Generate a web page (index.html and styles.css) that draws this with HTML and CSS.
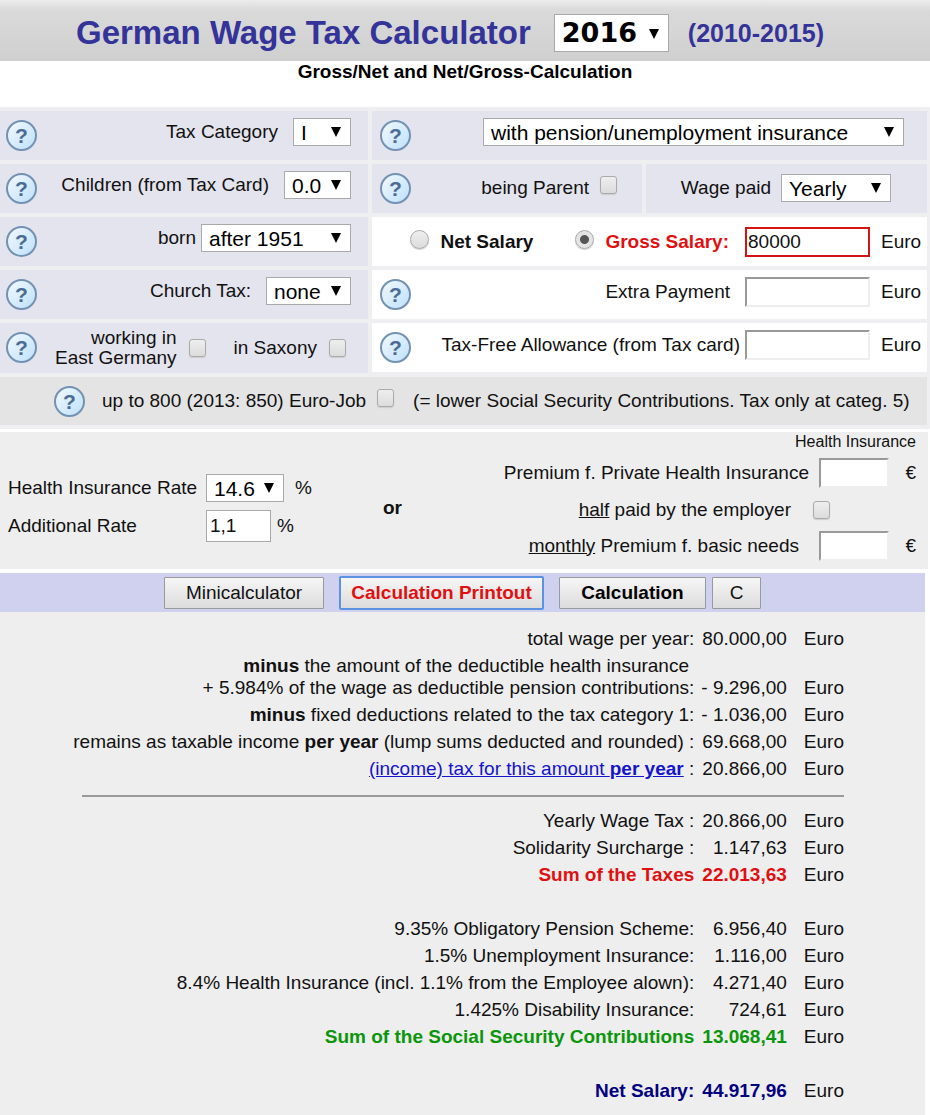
FILE: index.html
```html
<!DOCTYPE html>
<html lang="en">
<head>
<meta charset="utf-8">
<meta name="viewport" content="width=device-width, initial-scale=1">
<title>German Wage Tax Calculator</title>
<link rel="stylesheet" href="styles.css">
</head>
<body>

<header class="top">
  <h1>German Wage Tax Calculator</h1>
  <span class="select year"><select aria-label="Year"><option>2016</option></select></span>
  <span class="years">(2010-2015)</span>
</header>
<h2>Gross/Net and Net/Gross-Calculation</h2>

<form>
<div class="fields">
  <div class="cell">
    <a class="help" href="#">?</a>
    <div class="field">
      <label for="category">Tax Category</label>
      <span class="select category"><select id="category"><option>I</option></select></span>
    </div>
  </div>
  <div class="cell wide">
    <a class="help" href="#">?</a>
    <div class="field">
      <span class="select insurance"><select aria-label="Insurance"><option>with pension/unemployment insurance</option></select></span>
    </div>
  </div>

  <div class="cell">
    <a class="help" href="#">?</a>
    <div class="field">
      <label for="children">Children (from Tax Card)</label>
      <span class="select children"><select id="children"><option>0.0</option></select></span>
    </div>
  </div>
  <div class="split">
    <div class="cell parent">
      <a class="help" href="#">?</a>
      <div class="field">
        <label for="parent">being Parent</label>
        <input type="checkbox" id="parent">
      </div>
    </div>
    <div class="cell paid">
      <div class="field">
        <label for="paid">Wage paid</label>
        <span class="select period"><select id="paid"><option>Yearly</option></select></span>
      </div>
    </div>
  </div>

  <div class="cell">
    <a class="help" href="#">?</a>
    <div class="field near">
      <label for="born">born</label>
      <span class="select born"><select id="born"><option>after 1951</option></select></span>
    </div>
  </div>
  <div class="cell white salary">
    <div class="field">
      <input type="radio" name="salary" id="net">
      <label for="net"><b>Net Salary</b></label>
      <input type="radio" name="salary" id="gross" checked>
      <label for="gross"><b class="red">Gross Salary:</b></label>
      <input type="text" class="amount error" aria-label="Salary" value="80000">
      <span class="unit">Euro</span>
    </div>
  </div>

  <div class="cell">
    <a class="help" href="#">?</a>
    <div class="field">
      <label for="church">Church Tax:</label>
      <span class="select church"><select id="church"><option>none</option></select></span>
    </div>
  </div>
  <div class="cell white">
    <a class="help" href="#">?</a>
    <div class="field">
      <label for="extra">Extra Payment</label>
      <input type="text" class="amount" id="extra">
      <span class="unit">Euro</span>
    </div>
  </div>

  <div class="cell east">
    <a class="help" href="#">?</a>
    <div class="field">
      <label for="east">working in<br>East Germany</label>
      <input type="checkbox" id="east">
      <label for="saxony" class="saxony">in Saxony</label>
      <input type="checkbox" id="saxony">
    </div>
  </div>
  <div class="cell white">
    <a class="help" href="#">?</a>
    <div class="field near">
      <label for="allowance">Tax-Free Allowance (from Tax card)</label>
      <input type="text" class="amount" id="allowance">
      <span class="unit">Euro</span>
    </div>
  </div>

  <div class="cell job">
    <a class="help" href="#">?</a>
    <label for="job">up to 800 (2013: 850) Euro-Job</label>
    <input type="checkbox" id="job">
    <span>(= lower Social Security Contributions. Tax only at categ. 5)</span>
  </div>
</div>

<div class="health">
  <div class="public">
    <label for="rate">Health Insurance Rate</label>
    <div class="percent"><span class="select rate"><select id="rate"><option>14.6</option></select></span>%</div>
    <label for="additional">Additional Rate</label>
    <div class="percent near"><input type="text" id="additional" value="1,1">%</div>
  </div>
  <b class="or">or</b>
  <div class="private">
    <div class="caption">Health Insurance</div>
    <label for="premium">Premium f. Private Health Insurance</label>
    <input type="text" id="premium">
    <span>€</span>
    <label for="half" class="half"><u>half</u> paid by the employer</label>
    <input type="checkbox" id="half">
    <span></span>
    <label for="basic" class="basic"><u>monthly</u> Premium f. basic needs</label>
    <input type="text" id="basic">
    <span>€</span>
  </div>
</div>

<div class="buttons">
  <button type="button" class="mini">Minicalculator</button>
  <button type="button" class="printout">Calculation Printout</button>
  <button type="button" class="calc">Calculation</button>
  <button type="reset" class="clear">C</button>
</div>
</form>

<div class="results">
  <table>
    <tr><td>total wage per year:</td><td>80.000,00</td><td>Euro</td></tr>
    <tr><td><b>minus</b> the amount of the deductible health insurance&nbsp;<br>+ 5.984% of the wage as deductible pension contributions:</td><td>- 9.296,00</td><td>Euro</td></tr>
    <tr><td><b>minus</b> fixed deductions related to the tax category 1:</td><td>- 1.036,00</td><td>Euro</td></tr>
    <tr><td>remains as taxable income <b>per year</b> (lump sums deducted and rounded) :</td><td>69.668,00</td><td>Euro</td></tr>
    <tr><td><a href="#">(income) tax for this amount <b>per year</b></a> :</td><td>20.866,00</td><td>Euro</td></tr>
    <tr class="line"><td colspan="3"><hr></td></tr>
    <tr><td>Yearly Wage Tax :</td><td>20.866,00</td><td>Euro</td></tr>
    <tr><td>Solidarity Surcharge :</td><td>1.147,63</td><td>Euro</td></tr>
    <tr class="sum red"><td>Sum of the Taxes</td><td>22.013,63</td><td>Euro</td></tr>
    <tr class="gap"><td>9.35% Obligatory Pension Scheme:</td><td>6.956,40</td><td>Euro</td></tr>
    <tr><td>1.5% Unemployment Insurance:</td><td>1.116,00</td><td>Euro</td></tr>
    <tr><td>8.4% Health Insurance (incl. 1.1% from the Employee alown):</td><td>4.271,40</td><td>Euro</td></tr>
    <tr><td>1.425% Disability Insurance:</td><td>724,61</td><td>Euro</td></tr>
    <tr class="sum green"><td>Sum of the Social Security Contributions</td><td>13.068,41</td><td>Euro</td></tr>
    <tr class="sum navy gap"><td>Net Salary:</td><td>44.917,96</td><td>Euro</td></tr>
  </table>
</div>

</body>
</html>
```
FILE: styles.css
```css
* {
  box-sizing: border-box;
}

body {
  margin: 0;
  background: #fff;
  color: #111;
  font-family: "Liberation Sans", Arial, sans-serif;
  font-size: 19px;
  line-height: 22px;
}

/* header */
.top {
  display: flex;
  align-items: center;
  height: 61px;
  padding: 4px 0 0 76px;
  color: #333399;
  background: linear-gradient(#ececec, #dadada 10px, #cfcfcf);
}

h1 {
  margin: 0 23px 0 0;
  font-size: 33px;
  line-height: 38px;
}

.years {
  margin-left: 19px;
  font-size: 25px;
  font-weight: bold;
}

h2 {
  margin: 0;
  height: 46px;
  font-size: 19px;
  line-height: 22px;
  text-align: center;
  color: #000;
}

/* controls */
input, select, button {
  margin: 0;
  font-family: inherit;
  font-size: 19px;
  color: #111;
}

.select {
  position: relative;
  display: block;
  flex: none;
}

.select::after {
  content: "";
  position: absolute;
  right: 10px;
  top: 9px;
  border: 5px solid transparent;
  border-top: 10px solid #000;
  border-bottom: 0;
  pointer-events: none;
}

select {
  display: block;
  width: 100%;
  height: 28px;
  padding: 0 0 0 7px;
  font-size: 21px;
  color: #000;
  background: #fff;
  border: 1px solid #a9a9a9;
  border-radius: 0;
  -webkit-appearance: none;
  appearance: none;
}

.year { width: 115px; }
.year select {
  height: 38px;
  font-family: "DejaVu Sans", Verdana, sans-serif;
  font-size: 27px;
  font-weight: bold;
}
.year::after { top: 15px; }
.category { width: 58px; }
.children { width: 67px; }
.born { width: 150px; }
.church { width: 85px; }
.period { width: 110px; }
.rate { width: 78px; }
.insurance { width: 421px; }

input[type=text] {
  height: 30px;
  padding: 0 1px;
  background: #fff;
  border: 2px solid #eee;
  border-top-color: #999;
  border-left-color: #999;
  border-radius: 0;
}

input.amount { width: 125px; }

input.error {
  border-color: #d41414;
}

input[type=checkbox], input[type=radio] {
  flex: none;
  width: 17px;
  height: 18px;
  border: 1px solid #aaa;
  border-radius: 3px;
  background: linear-gradient(#eee, #dcdcdc);
  box-shadow: 0 1px 1px #ccc;
  -webkit-appearance: none;
  appearance: none;
}

input[type=radio] {
  width: 19px;
  height: 19px;
  border-radius: 50%;
}

input[type=radio]:checked {
  background: radial-gradient(#555 4px, #e4e4e4 5px);
}

/* these boxes sit a little above their text */
.parent input, .job input, .salary input[type=radio] {
  margin-bottom: 6px;
}

.help {
  display: block;
  flex: none;
  width: 31px;
  height: 31px;
  margin-top: 9px;
  border: 2px solid #7391b3;
  border-radius: 50%;
  background: linear-gradient(135deg, #f2f9ff, #bfe0fb);
  color: #4b6c94;
  font-size: 21px;
  font-weight: bold;
  line-height: 27px;
  text-align: center;
  text-decoration: none;
}

.red { color: #e01010; }
.green { color: #0a960a; }
.navy { color: #000080; }

/* tax fields */
.fields {
  display: grid;
  grid-template-columns: 368fr 555fr;
  gap: 4px;
  padding: 4px 3px 4px 0;
  background: #efeff1;
}

.cell {
  display: flex;
  align-items: flex-start;
  height: 49px;
  padding: 0 17px 0 6px;
  background: #e4e4ee;
}

.field {
  display: flex;
  align-items: center;
  gap: 15px;
  margin-left: auto;
  padding-top: 7px;
  white-space: nowrap;
}

.near { gap: 5px; }
.wide { padding-right: 23px; }

.split {
  display: grid;
  grid-template-columns: 270fr 281fr;
  gap: 4px;
}

.parent { padding-right: 25px; }
.parent .field { gap: 11px; padding-top: 12px; }
.paid { padding-right: 36px; }
.paid .field { gap: 10px; padding-top: 10px; }

.white {
  padding-right: 7px;
  background: #fff;
}

.unit {
  width: 50px;
  padding-left: 11px;
}

.white .unit { margin-left: -15px; }
.white .near .unit { margin-left: -5px; }

.salary .field {
  gap: 11px;
  padding-top: 10px;
}
.salary #gross { margin-left: 31px; }
.salary .amount { margin-left: 5px; }
.salary .unit { margin-left: -11px; }

.wide, .parent, .white { padding-left: 8px; }

.east {
  height: 50px;
  padding-right: 22px;
}
.east .field {
  gap: 12px;
  padding-top: 5px;
  line-height: 20px;
  text-align: right;
}
.east .saxony { margin-left: 16px; }

.job {
  grid-column: 1 / -1;
  align-items: center;
  gap: 11px;
  height: 48px;
  padding-left: 54px;
  background: #e4e4e4;
  white-space: nowrap;
}
.job .help { margin: 0 6px 0 0; }
.job span { margin-left: 8px; }

/* health insurance */
.health {
  display: flex;
  align-items: flex-start;
  height: 137px;
  margin: 3px 2px 4px 0;
  padding: 0 12px 0 8px;
  background: #eee;
  white-space: nowrap;
}

.public {
  display: grid;
  grid-template-columns: 198px auto;
  row-gap: 8px;
  align-items: center;
  padding-top: 42px;
}

.percent {
  display: flex;
  align-items: center;
  gap: 11px;
}
.percent.near { gap: 6px; }

.public input[type=text] {
  width: 65px;
  height: 32px;
  padding: 0 3px;
  border: 1px solid #a9a9a9;
}

.or { margin: 65px auto 0 71px; }

.private {
  display: grid;
  grid-template-columns: auto 70px 17px;
  column-gap: 10px;
  grid-template-rows: 22px 37px 37px 35px;
  align-items: center;
  text-align: right;
}

.private .caption {
  grid-column: 1 / -1;
  align-self: start;
  font-size: 16px;
  line-height: 20px;
}

.private .half { padding-right: 18px; }
.private .basic { padding-right: 10px; }
.private input[type=text] { width: 70px; }
.private input[type=checkbox] { margin-left: -6px; }

/* buttons */
.buttons {
  display: flex;
  justify-content: center;
  align-items: center;
  gap: 15px;
  height: 39px;
  margin-right: 5px;
  background: #d0d0ef;
}

button {
  height: 32px;
  padding: 0;
  border: 1px solid #999;
  border-radius: 1px;
  background: linear-gradient(#f6f6f6, #dcdcdc);
}

.mini { width: 160px; }

.printout {
  width: 205px;
  height: 34px;
  border: 2px solid #5b93e0;
  border-radius: 2px;
  color: #e01010;
  font-weight: bold;
}

.calc {
  width: 147px;
  color: #000;
  font-weight: bold;
}

.clear {
  width: 49px;
  margin-left: -9px;
}

/* results */
.results {
  margin-right: 5px;
  padding: 13px 81px 13px 0;
  background: #eee;
}

table {
  margin-left: auto;
  border-collapse: collapse;
}

td {
  padding: 3px 0 2px 7px;
  text-align: right;
  vertical-align: bottom;
  white-space: nowrap;
}

td:first-child { padding-left: 0; }
td:last-child { padding-left: 17px; }

.gap td { padding-top: 30px; }

.line td { padding: 0; }

hr {
  height: 2px;
  margin: 13px 0 10px 9px;
  border: 0;
  background: #999;
}

.sum td { font-weight: bold; }

.sum td:last-child {
  color: #111;
  font-weight: normal;
}

a { color: #1414cc; }
```
